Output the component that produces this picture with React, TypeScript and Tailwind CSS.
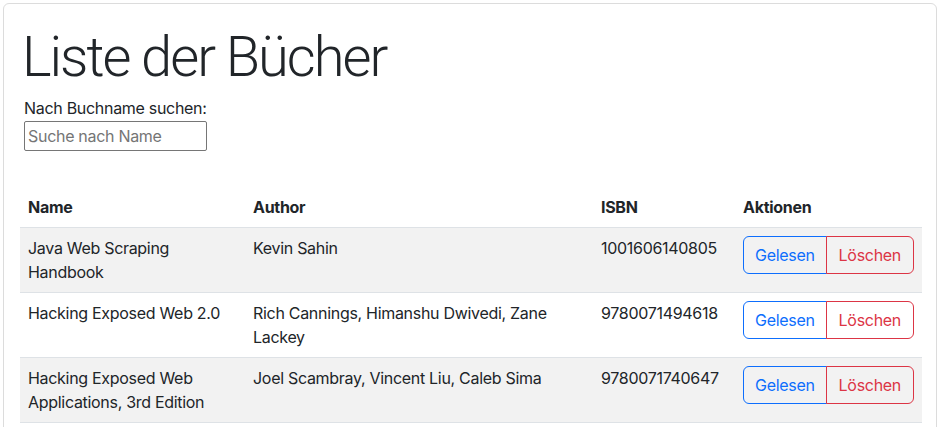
import React from "react";

const books = [
  { name: "Java Web Scraping Handbook", author: "Kevin Sahin", isbn: "1001606140805" },
  { name: "Hacking Exposed Web 2.0", author: "Rich Cannings, Himanshu Dwivedi, Zane Lackey", isbn: "9780071494618" },
  { name: "Hacking Exposed Web Applications, 3rd Edition", author: "Joel Scambray, Vincent Liu, Caleb Sima", isbn: "9780071740647" },
];

export default function App() {
  return (
    <div className="min-h-[427px] bg-white pt-[3px] pl-[3px] pr-[5px] text-[#212529] tracking-[-0.3px]" style={{ fontFamily: "Inter, 'Liberation Sans', sans-serif" }}>
      <div className="h-[430px] rounded-[6px] border border-[#dcdcdc] p-4">
        <h1 className="mt-[4px] mb-[5px] h-[67px] pl-[2px] text-[56px] font-light leading-[67px] tracking-[-2px]" style={{ fontFamily: "Roboto, Inter, sans-serif" }}>Liste der Bücher</h1>
        <div className="pl-1">
          <label className="block text-base leading-6">Nach Buchname suchen:</label>
          <input
            type="text"
            placeholder="Suche nach Name"
            className="mt-[1px] h-[30px] w-[183px] rounded-[2px] border border-[#767676] px-[3px] text-base text-[#212529] placeholder:text-[#757575] outline-none"
          />
        </div>
        <table className="mt-9 w-[902px] table-fixed border-collapse text-base leading-6">
          <colgroup>
            <col className="w-[225px]" />
            <col className="w-[348px]" />
            <col className="w-[142px]" />
            <col className="w-[187px]" />
          </colgroup>
          <thead>
            <tr className="border-b border-[#dee2e6]">
              <th className="p-2 text-left font-bold">Name</th>
              <th className="p-2 text-left font-bold">Author</th>
              <th className="p-2 text-left font-bold">ISBN</th>
              <th className="p-2 text-left font-bold">Aktionen</th>
            </tr>
          </thead>
          <tbody>
            {books.map((b, i) => (
              <tr key={b.isbn} className={`border-b border-[#dee2e6] ${i % 2 === 0 ? "bg-[#f2f2f2]" : "bg-white"}`}>
                <td className="p-2 align-top">{b.name}</td>
                <td className="p-2 align-top">{b.author}</td>
                <td className="p-2 align-top">{b.isbn}</td>
                <td className="p-2 align-top">
                  <div className="flex">
                    <button className="h-[38px] rounded-l-[6px] border border-[#0d6efd] bg-transparent px-[11px] text-[#0d6efd]">Gelesen</button>
                    <button className="-ml-px h-[38px] rounded-r-[6px] border border-[#dc3545] bg-transparent px-3 text-[#dc3545]">Löschen</button>
                  </div>
                </td>
              </tr>
            ))}
          </tbody>
        </table>
      </div>
    </div>
  );
}
